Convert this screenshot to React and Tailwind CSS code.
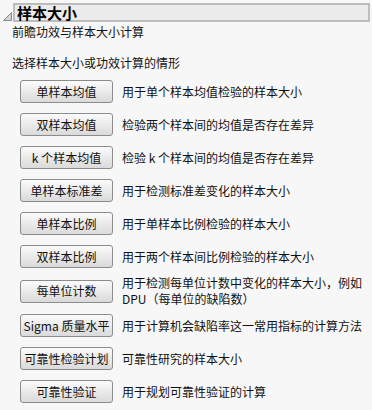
import React from "react";

const rows = [
  ["单样本均值", "用于单个样本均值检验的样本大小"],
  ["双样本均值", "检验两个样本间的均值是否存在差异"],
  ["k 个样本均值", "检验 k 个样本间的均值是否存在差异"],
  ["单样本标准差", "用于检测标准差变化的样本大小"],
  ["单样本比例", "用于单样本比例检验的样本大小"],
  ["双样本比例", "用于两个样本间比例检验的样本大小"],
  ["每单位计数", null],
  ["Sigma 质量水平", "用于计算机会缺陷率这一常用指标的计算方法"],
  ["可靠性检验计划", "可靠性研究的样本大小"],
  ["可靠性验证", "用于规划可靠性验证的计算"],
];

function Btn({ children }) {
  return (
    <div className="w-[93px] h-[23px] shrink-0 flex items-center justify-center rounded-[3px] border border-[#8c8c8c] bg-gradient-to-b from-[#fbfbfb] to-[#dadada] text-[12px] text-[#111] whitespace-nowrap leading-none">
      {children}
    </div>
  );
}

export default function App() {
  return (
    <div
      className="w-[372px] h-[410px] bg-[#f7f7f7] text-[#111] overflow-hidden relative"
      style={{ fontFamily: '"Noto Sans CJK SC", "Noto Sans", sans-serif' }}
    >
      <div className="flex items-center pt-[3px] pr-[2px]">
        <svg width="13" height="19" viewBox="0 0 13 19" className="shrink-0">
          <polygon points="3.5,17.5 11.5,9.5 11.5,17.5" fill="#d4d4d4" stroke="#8a8a8a" strokeWidth="1" />
        </svg>
        <div className="flex-1 h-[19px] border-2 border-[#bdbdbd] bg-[#ebebeb] flex items-center pl-[2px]">
          <span className="text-[15px] font-bold leading-none text-black">样本大小</span>
        </div>
      </div>
      <div className="pl-[12px] pt-[2px] text-[12px] leading-[16px]">前瞻功效与样本大小计算</div>
      <div className="pl-[12px] pt-[15px] text-[12px] leading-[16px]">选择样本大小或功效计算的情形</div>
      <div className="flex flex-col gap-[10px] pl-[20px] pt-[9px]">
        {rows.map(([b, d], i) => (
          <div key={i} className={"flex items-center gap-[9px] " + (d === null ? "h-[26px]" : "h-[23px]")}>
            <Btn>{b}</Btn>
            {d === null ? (
              <div className="text-[12px] leading-[16px] whitespace-nowrap">
                用于检测每单位计数中变化的样本大小，例如
                <br />
                DPU（每单位的缺陷数）
              </div>
            ) : (
              <div className="text-[12px] leading-[16px] whitespace-nowrap">{d}</div>
            )}
          </div>
        ))}
      </div>
    </div>
  );
}
